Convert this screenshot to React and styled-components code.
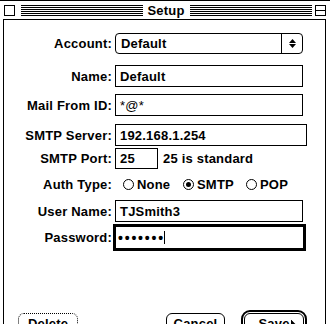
import React from 'react';
import styled, { createGlobalStyle } from 'styled-components';

const Global = createGlobalStyle`
  html, body { margin: 0; padding: 0; background: #fff; }
  body { font-family: "Liberation Sans", Arial, sans-serif; }
`;

const Window = styled.div`
  width: 330px;
  height: 324px;
  overflow: hidden;
  background: #fff;
  display: flex;
  flex-direction: column;
  font: bold 13px "Liberation Sans", Arial, sans-serif;
  letter-spacing: 0.2px;
  color: #000;
`;

const TitleBar = styled.div`
  flex-shrink: 0;
  box-sizing: border-box;
  height: 19px;
  border-top: 1px solid #000;
  display: flex;
  align-items: center;
  padding: 0 4px;
`;

const CloseBox = styled.div`
  box-sizing: border-box;
  width: 11px;
  height: 11px;
  border: 1px solid #000;
  margin-right: 6px;
`;

const Stripes = styled.div`
  flex: 1;
  height: 11px;
  background: repeating-linear-gradient(to bottom, #000 0 1px, transparent 1px 2px);
`;

const Title = styled.div`
  padding: 0 5px 0 4px;
  line-height: 15px;
`;

const ZoomBox = styled.div`
  position: relative;
  box-sizing: border-box;
  width: 11px;
  height: 11px;
  border: 1px solid #000;
  margin-left: 3px;
  &::after {
    content: "";
    position: absolute;
    left: 0;
    right: 0;
    top: 4px;
    height: 1px;
    background: #000;
  }
`;

const Panel = styled.div`
  flex-shrink: 0;
  margin: 0 4px 0 3px;
  border: 1px solid #000;
  border-bottom: none;
  padding-top: 13px;
  display: flex;
  flex-direction: column;
`;

const Row = styled.div`
  display: grid;
  grid-template-columns: 108px auto;
  column-gap: 3px;
  align-items: center;
  margin-top: ${p => p.$mt || 0}px;
`;

const Label = styled.label`
  text-align: right;
  white-space: nowrap;
`;

const Field = styled.div`
  box-sizing: border-box;
  width: ${p => p.$w}px;
  height: ${p => p.$h || 22}px;
  border: 1px solid #000;
  padding: 0 4px;
  display: flex;
  align-items: center;
  font-weight: ${p => (p.$light ? 400 : 700)};
  white-space: nowrap;
`;

const FocusField = styled(Field)`
  border-width: 3px;
  margin-left: -2px;
  padding-left: 2px;
`;

const Dots = styled.span`
  font-size: 14px;
  letter-spacing: 1.8px;
`;

const Caret = styled.span`
  display: inline-block;
  width: 1px;
  height: 13px;
  background: #000;
  margin-left: -1px;
`;

const Popup = styled.div`
  box-sizing: border-box;
  width: 188px;
  height: 21px;
  border: 1px solid #000;
  border-radius: 4px;
  display: flex;
`;

const PopupValue = styled.div`
  width: 166px;
  box-sizing: border-box;
  padding-left: 5px;
  display: flex;
  align-items: center;
  border-right: 1px solid #000;
`;

const PopupArrow = styled.div`
  flex: 1;
  display: flex;
  align-items: center;
  justify-content: center;
`;

const Inline = styled.div`
  display: flex;
  align-items: center;
  height: ${p => (p.$h ? `${p.$h}px` : 'auto')};
  gap: ${p => p.$gap || 0}px;
  padding-left: ${p => p.$pl || 0}px;
`;

const RadioItem = styled.div`
  display: flex;
  align-items: center;
  gap: 3px;
  width: ${p => (p.$w ? `${p.$w}px` : 'auto')};
`;

const RadioCircle = styled.span`
  box-sizing: border-box;
  width: 11px;
  height: 11px;
  border: 1px solid #000;
  border-radius: 50%;
  display: flex;
  align-items: center;
  justify-content: center;
  &::after {
    content: "";
    width: 5px;
    height: 5px;
    border-radius: 50%;
    background: ${p => (p.$on ? '#000' : 'transparent')};
  }
`;

const ButtonRow = styled.div`
  display: flex;
  align-items: flex-start;
  margin-top: 59px;
  padding-left: 14px;
`;

const Button = styled.div`
  box-sizing: border-box;
  width: ${p => (p.$w ? `${p.$w}px` : '100%')};
  height: 20px;
  border: 1px ${p => (p.$dotted ? 'dotted' : 'solid')} #000;
  border-radius: 6px;
  display: flex;
  align-items: center;
  justify-content: center;
  margin-top: ${p => p.$mt || 0}px;
  margin-left: ${p => p.$ml || 0}px;
`;

const DefaultRing = styled.div`
  position: relative;
  box-sizing: border-box;
  width: 66px;
  height: 26px;
  border: 2px solid #000;
  border-radius: 9px;
  padding: 1px;
  margin-left: ${p => p.$ml || 0}px;
`;

const Pointer = styled.svg`
  position: absolute;
  left: 47px;
  top: 6px;
`;

export default function App() {
  return (
    <>
      <Global />
      <Window>
        <TitleBar>
          <CloseBox />
          <Stripes />
          <Title>Setup</Title>
          <Stripes />
          <ZoomBox />
        </TitleBar>
        <Panel>
          <Row>
            <Label>Account:</Label>
            <Popup>
              <PopupValue>Default</PopupValue>
              <PopupArrow>
                <svg width="7" height="9" viewBox="0 0 7 9">
                  <polygon points="3.5,0 7,4 0,4" fill="#000" />
                  <polygon points="0,5 7,5 3.5,9" fill="#000" />
                </svg>
              </PopupArrow>
            </Popup>
          </Row>
          <Row $mt={11}>
            <Label>Name:</Label>
            <Field $w={188}>Default</Field>
          </Row>
          <Row $mt={7}>
            <Label>Mail From ID:</Label>
            <Field $w={188} $light>*@*</Field>
          </Row>
          <Row $mt={8}>
            <Label>SMTP Server:</Label>
            <Field $w={192}>192.168.1.254</Field>
          </Row>
          <Row $mt={2}>
            <Label>SMTP Port:</Label>
            <Inline $gap={5}>
              <Field $w={43} $h={21}>25</Field>
              <span>25 is standard</span>
            </Inline>
          </Row>
          <Row $mt={5}>
            <Label>Auth Type:</Label>
            <Inline $pl={8} $h={20}>
              <RadioItem $w={60}>
                <RadioCircle />
                <span>None</span>
              </RadioItem>
              <RadioItem $w={63}>
                <RadioCircle $on />
                <span>SMTP</span>
              </RadioItem>
              <RadioItem>
                <RadioCircle />
                <span>POP</span>
              </RadioItem>
            </Inline>
          </Row>
          <Row $mt={6}>
            <Label>User Name:</Label>
            <Field $w={188}>TJSmith3</Field>
          </Row>
          <Row $mt={2}>
            <Label>Password:</Label>
            <FocusField $w={193} $h={27}>
              <Dots>•••••••</Dots>
              <Caret />
            </FocusField>
          </Row>
          <ButtonRow>
            <Button $w={60} $mt={3} $dotted>Delete</Button>
            <Button $w={59} $mt={3} $ml={88}>Cancel</Button>
            <DefaultRing $ml={16}>
              <Button>Save</Button>
              <Pointer width="11" height="18" viewBox="0 0 11 18">
                <path d="M0.5 0.5 L0.5 14.5 L3.8 11.3 L6.2 16.8 L8.2 15.9 L5.9 10.7 L10.3 10.7 Z" fill="#000" stroke="#fff" strokeWidth="1" />
              </Pointer>
            </DefaultRing>
          </ButtonRow>
        </Panel>
      </Window>
    </>
  );
}
